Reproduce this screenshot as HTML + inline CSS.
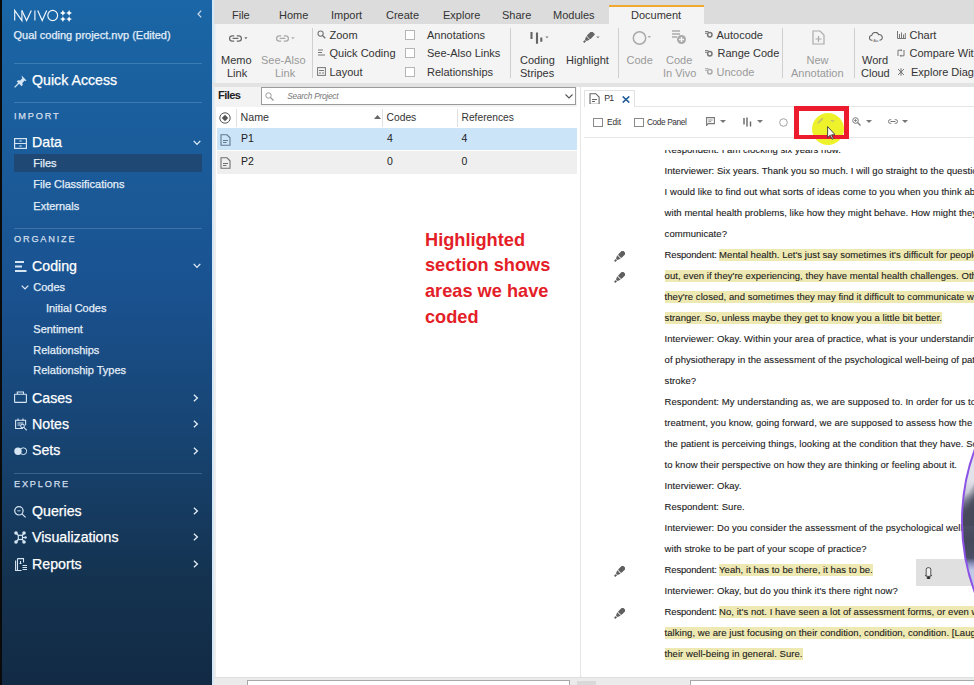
<!DOCTYPE html>
<html><head><meta charset="utf-8">
<style>
*{box-sizing:border-box;margin:0;padding:0}
html,body{width:974px;height:685px;overflow:hidden;background:#fff;font-family:"Liberation Sans",sans-serif;position:relative}
.a{position:absolute;white-space:nowrap}
#side{position:absolute;left:0;top:0;width:212px;height:685px;background:linear-gradient(180deg,#1a66a6 0%,#1b5c9a 22%,#1a5290 42%,#174370 65%,#14324f 85%,#122a44 100%)}
#blk{position:absolute;left:0;top:0;width:2px;height:685px;background:#0a0a0a}
.sep{position:absolute;left:14px;width:188px;height:1px;background:rgba(150,190,230,.28)}
.st{color:#fff;font-size:14.3px}
.ss{color:#eaf2fa;font-size:11px}
.sh{color:#d8e4f0;font-size:10px;letter-spacing:2.2px}
.chev{position:absolute;color:#e6eef7}
#tabs{position:absolute;left:214px;top:0;width:760px;height:24px;background:#dcdcdc}
.tab{position:absolute;top:8.5px;font-size:11px;color:#333}
#rib{position:absolute;left:214px;top:24px;width:760px;height:59px;background:#f4f4f4}
#gap{position:absolute;left:212px;top:83px;width:762px;height:4px;background:#e3e3e3}
.rt{font-size:11px;color:#333}
.gr{color:#9a9a9a}
.dl{position:absolute;left:83.6px;white-space:nowrap;font-size:9.5px;line-height:21px;color:#1a1a1a;-webkit-text-stroke:0.1px #1a1a1a;letter-spacing:0.05px}
.hl{background:#eee9b3;padding:0.4px 0 0.7px}
.sd{-webkit-text-stroke:0.25px currentColor}
.vsep{position:absolute;width:1px;background:#cfcfcf}
</style></head><body>
<div id="side"></div>
<div id="blk"></div>
<div class="a" style="left:212px;top:0;width:2px;height:685px;background:#d6e8f6"></div>
<div class="a" style="left:214px;top:87px;width:2px;height:590px;background:#ededed"></div>

<!-- sidebar content -->
<svg class="a" style="left:13px;top:9px" width="60" height="14" viewBox="0 0 60 14"><g fill="none" stroke="#f2f7fc" stroke-width="1.15"><path d="M1.7 11.6V1.4L8.9 11.6V1.4"/><path d="M8.9 1.4L13.6 11.6 18.3 1.4"/><path d="M21.9 1.4v10.2"/><path d="M24.7 1.4L29.2 11.6 33.7 1.4"/><ellipse cx="39.7" cy="6.5" rx="4.9" ry="5.1"/></g></svg>
<svg class="a" style="left:59.5px;top:10px" width="12" height="12" viewBox="0 0 12 12"><g fill="#fff"><path d="M2.9 0.0Q3.4 2.4 5.8 2.9Q3.4 3.4 2.9 5.8Q2.4 3.4 0.0 2.9Q2.4 2.4 2.9 0.0z"/><path d="M9.1 0.0Q9.6 2.4 12.0 2.9Q9.6 3.4 9.1 5.8Q8.6 3.4 6.199999999999999 2.9Q8.6 2.4 9.1 0.0z"/><path d="M2.9 6.199999999999999Q3.4 8.6 5.8 9.1Q3.4 9.6 2.9 12.0Q2.4 9.6 0.0 9.1Q2.4 8.6 2.9 6.199999999999999z"/><path d="M9.1 6.199999999999999Q9.6 8.6 12.0 9.1Q9.6 9.6 9.1 12.0Q8.6 9.6 6.199999999999999 9.1Q8.6 8.6 9.1 6.199999999999999z"/></g></svg>
<svg class="a" style="left:197px;top:10px" width="5" height="8" viewBox="0 0 5 8"><path d="M4.2 0.6L1 4l3.2 3.4" fill="none" stroke="#cfe0f0" stroke-width="1.2"/></svg>
<div class="a sd" style="left:13.5px;top:27.99px;font-size:11px;line-height:14px;color:#e3eef8;">Qual coding project.nvp (Edited)</div>
<div class="sep" style="top:62.5px"></div>
<div class="sep" style="top:102.0px"></div>
<div class="sep" style="top:227.9px"></div>
<div class="sep" style="top:472.8px"></div>
<div class="a sd" style="left:14px;top:109.81px;font-size:9.2px;line-height:12px;color:#d2dfec;letter-spacing:1.8px">IMPORT</div>
<div class="a sd" style="left:14px;top:232.81px;font-size:9.2px;line-height:12px;color:#d2dfec;letter-spacing:1.8px">ORGANIZE</div>
<div class="a sd" style="left:14px;top:477.81px;font-size:9.2px;line-height:12px;color:#d2dfec;letter-spacing:1.8px">EXPLORE</div>
<div class="a sd" style="left:32px;top:70.98px;font-size:14.2px;line-height:18px;color:#ffffff;">Quick Access</div>
<div class="a sd" style="left:32px;top:133.48px;font-size:14.2px;line-height:18px;color:#ffffff;">Data</div>
<div class="a sd" style="left:32px;top:257.48px;font-size:14.2px;line-height:18px;color:#ffffff;">Coding</div>
<div class="a sd" style="left:32px;top:388.78px;font-size:14.2px;line-height:18px;color:#ffffff;">Cases</div>
<div class="a sd" style="left:32px;top:415.08px;font-size:14.2px;line-height:18px;color:#ffffff;">Notes</div>
<div class="a sd" style="left:32px;top:441.28px;font-size:14.2px;line-height:18px;color:#ffffff;">Sets</div>
<div class="a sd" style="left:32px;top:501.68px;font-size:14.2px;line-height:18px;color:#ffffff;">Queries</div>
<div class="a sd" style="left:32px;top:527.98px;font-size:14.2px;line-height:18px;color:#ffffff;">Visualizations</div>
<div class="a sd" style="left:32px;top:555.08px;font-size:14.2px;line-height:18px;color:#ffffff;">Reports</div>
<div class="a" style="left:14px;top:154.2px;width:187.5px;height:17.8px;background:#1f4874"></div>
<div class="a sd" style="left:33.3px;top:156.19px;font-size:11px;line-height:14px;color:#e3eef8;">Files</div>
<div class="a sd" style="left:33.3px;top:177.49px;font-size:11px;line-height:14px;color:#e3eef8;">File Classifications</div>
<div class="a sd" style="left:33.3px;top:198.59px;font-size:11px;line-height:14px;color:#e3eef8;">Externals</div>
<div class="a sd" style="left:33.3px;top:279.79px;font-size:11px;line-height:14px;color:#e3eef8;">Codes</div>
<div class="a sd" style="left:45.9px;top:300.79px;font-size:11px;line-height:14px;color:#e3eef8;">Initial Codes</div>
<div class="a sd" style="left:33.3px;top:321.59px;font-size:11px;line-height:14px;color:#e3eef8;">Sentiment</div>
<div class="a sd" style="left:33.3px;top:342.69px;font-size:11px;line-height:14px;color:#e3eef8;">Relationships</div>
<div class="a sd" style="left:33.3px;top:363.49px;font-size:11px;line-height:14px;color:#e3eef8;">Relationship Types</div>
<!-- SIDEICONS -->
<svg class="a" style="left:13.5px;top:74.5px" width="13" height="13" viewBox="0 0 13 13"><g fill="#d6e5f3"><path d="M7.6 0.5l4.9 4.9-1.2 0.6-0.6-0.4-2.3 2.3 0.3 2.2-1.1 1.1L2.8 6.4l1.1-1.1 2.2 0.3 2.3-2.3-0.4-0.6z"/></g><path d="M5.2 7.8L0.6 12.4" stroke="#d6e5f3" stroke-width="1.3"/></svg>
<svg class="a" style="left:13.5px;top:137.5px" width="13" height="11" viewBox="0 0 13 11"><g fill="none" stroke="#d6e5f3" stroke-width="1.2"><rect x="0.6" y="0.6" width="11.8" height="9.8"/><path d="M0.6 5.5h11.8M5.3 3h2.4M5.3 8h2.4"/></g></svg>
<svg class="a" style="left:14.5px;top:260.5px" width="12" height="11" viewBox="0 0 12 11"><g stroke="#d6e5f3" stroke-width="1.8"><path d="M0 1h9M0 5.5h7M0 10h11.5"/></g></svg>
<svg class="a" style="left:14px;top:391px" width="13" height="12" viewBox="0 0 13 12"><g fill="none" stroke="#d6e5f3" stroke-width="1.1"><rect x="0.6" y="3.3" width="11.8" height="8.1" rx="0.5"/><path d="M3.3 3.3V1h6.2v2.3"/></g></svg>
<svg class="a" style="left:14.5px;top:417.5px" width="12.5" height="13" viewBox="0 0 12.5 13"><g fill="none" stroke="#d6e5f3" stroke-width="1.1"><path d="M8 10.5H0.6V2.2h10v5"/><path d="M3 0.5v2.5M8 0.5v2.5M2.5 5h6M2.5 7h3"/><circle cx="7.5" cy="8" r="1.8"/><path d="M8.8 9.3l3 3"/></g></svg>
<svg class="a" style="left:13.5px;top:447px" width="13.5" height="8.5" viewBox="0 0 13.5 8.5"><circle cx="4" cy="4.2" r="3.7" fill="#d6e5f3"/><circle cx="9.3" cy="4.2" r="3.4" fill="none" stroke="#d6e5f3" stroke-width="1"/></svg>
<svg class="a" style="left:14px;top:505.5px" width="13" height="12" viewBox="0 0 13 12"><g fill="none" stroke="#d6e5f3" stroke-width="1.2"><circle cx="4.9" cy="4.8" r="4.2"/><path d="M7.9 7.9l3.7 3.5"/><path d="M3.3 4.8h3.2" stroke-width="0.9"/></g></svg>
<svg class="a" style="left:13.5px;top:531px" width="13" height="13" viewBox="0 0 13 13"><g fill="#d6e5f3"><circle cx="2" cy="2" r="1.8"/><circle cx="10" cy="2" r="1.8"/><circle cx="2" cy="11" r="1.8"/><circle cx="10" cy="11" r="1.8"/><circle cx="11.5" cy="6.5" r="1.3"/></g><g fill="none" stroke="#d6e5f3" stroke-width="1.2"><rect x="4.3" y="4.3" width="4.2" height="4.2"/><path d="M2 2l2.3 2.3M10 2L8.5 4.3M2 11l2.3-2.5M10 11L8.5 8.5M8.5 6.5h3"/></g></svg>
<svg class="a" style="left:14.5px;top:557.5px" width="12.5" height="13.5" viewBox="0 0 12.5 13.5"><g fill="none" stroke="#d6e5f3" stroke-width="1.1"><path d="M2.5 12.5H0.6V2.5"/><path d="M2.5 0.6h6v4M2.5 0.6v11.9h4"/><path d="M5.5 3v2M4.5 5.5h2"/></g><g stroke="#d6e5f3" stroke-width="1"><path d="M7.5 7.5h5M7.5 9.5h5M7.5 11.5h5"/></g></svg>
<!-- chevrons -->
<svg class="a" style="left:192.5px;top:139.5px" width="8" height="6" viewBox="0 0 8 6"><path d="M0.7 0.9L4 4.4 7.3 0.9" fill="none" stroke="#e4eef8" stroke-width="1.3"/></svg>
<svg class="a" style="left:192.5px;top:262.5px" width="8" height="6" viewBox="0 0 8 6"><path d="M0.7 0.9L4 4.4 7.3 0.9" fill="none" stroke="#e4eef8" stroke-width="1.3"/></svg>
<svg class="a" style="left:21px;top:284.5px" width="8" height="5" viewBox="0 0 8 5"><path d="M0.7 0.7L4 4 7.3 0.7" fill="none" stroke="#e4eef8" stroke-width="1.2"/></svg>
<svg class="a" style="left:193px;top:394px" width="6" height="8" viewBox="0 0 6 8"><path d="M0.9 0.7L4.4 4 0.9 7.3" fill="none" stroke="#e4eef8" stroke-width="1.3"/></svg>
<svg class="a" style="left:193px;top:420.3px" width="6" height="8" viewBox="0 0 6 8"><path d="M0.9 0.7L4.4 4 0.9 7.3" fill="none" stroke="#e4eef8" stroke-width="1.3"/></svg>
<svg class="a" style="left:193px;top:446.5px" width="6" height="8" viewBox="0 0 6 8"><path d="M0.9 0.7L4.4 4 0.9 7.3" fill="none" stroke="#e4eef8" stroke-width="1.3"/></svg>
<svg class="a" style="left:193px;top:506.9px" width="6" height="8" viewBox="0 0 6 8"><path d="M0.9 0.7L4.4 4 0.9 7.3" fill="none" stroke="#e4eef8" stroke-width="1.3"/></svg>
<svg class="a" style="left:193px;top:533.2px" width="6" height="8" viewBox="0 0 6 8"><path d="M0.9 0.7L4.4 4 0.9 7.3" fill="none" stroke="#e4eef8" stroke-width="1.3"/></svg>
<svg class="a" style="left:193px;top:560.3px" width="6" height="8" viewBox="0 0 6 8"><path d="M0.9 0.7L4.4 4 0.9 7.3" fill="none" stroke="#e4eef8" stroke-width="1.3"/></svg>

<!-- tabs -->
<div id="tabs"></div>
<div class="tab" style="left:232px">File</div>
<div class="tab" style="left:279px">Home</div>
<div class="tab" style="left:331px">Import</div>
<div class="tab" style="left:386px">Create</div>
<div class="tab" style="left:443px">Explore</div>
<div class="tab" style="left:502px">Share</div>
<div class="tab" style="left:553px">Modules</div>
<div class="a" style="left:609px;top:5px;width:95px;height:19px;background:#f4f4f4;border-top:2px solid #f0a830"></div>
<div class="tab" style="left:631px">Document</div>

<!-- ribbon -->
<div id="rib"></div>
<div id="gap"></div>
<!-- ribbon content -->
<div class="a" style="left:214px;top:24px;width:2px;height:59px;background:#e9eef3"></div>
<svg class="a" style="left:228.5px;top:34.5px" width="19" height="7" viewBox="0 0 19 7"><g fill="none" stroke="#6a6a6a" stroke-width="1.25"><path d="M5.2 0.8H3.2A2.6 2.6 0 0 0 3.2 6H5.2M7.8 0.8h2a2.6 2.6 0 0 1 0 5.2h-2M3.6 3.4h5.8"/></g><path d="M15.3 2.2h3.2l-1.6 2z" fill="#6a6a6a"/></svg>
<div class="a rt" style="left:221px;top:53.5px;line-height:13px">Memo</div>
<div class="a rt" style="left:227px;top:66.5px;line-height:13px">Link</div>
<svg class="a" style="left:276px;top:34.5px" width="19" height="7" viewBox="0 0 19 7"><g fill="none" stroke="#a8a8a8" stroke-width="1.25"><path d="M5.2 0.8H3.2A2.6 2.6 0 0 0 3.2 6H5.2M7.8 0.8h2a2.6 2.6 0 0 1 0 5.2h-2M3.6 3.4h5.8"/></g><path d="M15.3 2.2h3.2l-1.6 2z" fill="#a8a8a8"/></svg>
<div class="a rt gr" style="left:261px;top:53.5px;line-height:13px">See-Also</div>
<div class="a rt gr" style="left:275px;top:66.5px;line-height:13px">Link</div>
<div class="vsep" style="left:312px;top:28px;height:50px"></div>

<svg class="a" style="left:317px;top:30px" width="9" height="9" viewBox="0 0 9 9"><circle cx="3.6" cy="3.6" r="2.6" fill="none" stroke="#777" stroke-width="1.1"/><path d="M5.5 5.5L8.3 8.3" stroke="#777" stroke-width="1.4"/></svg>
<div class="a rt" style="left:329.5px;top:29.2px;line-height:13px">Zoom</div>
<svg class="a" style="left:317px;top:49px" width="9" height="8" viewBox="0 0 9 8"><path d="M1 1h5M1 3.5h4M1 6h7" stroke="#777" stroke-width="1.1"/></svg>
<div class="a rt" style="left:329.5px;top:47.2px;line-height:13px">Quick Coding</div>
<svg class="a" style="left:317px;top:67px" width="9" height="9" viewBox="0 0 9 9"><rect x="0.6" y="0.6" width="7.8" height="7.8" fill="none" stroke="#777" stroke-width="1"/><path d="M2 3.5h5M2 6h2M5 6h2" stroke="#777" stroke-width="1"/></svg>
<div class="a rt" style="left:329.5px;top:66.1px;line-height:13px">Layout</div>

<div class="a" style="left:405px;top:29.5px;width:10px;height:10px;border:1px solid #b5b5b5;background:#fff"></div>
<div class="a rt" style="left:427px;top:29.2px;line-height:13px">Annotations</div>
<div class="a" style="left:405px;top:47.5px;width:10px;height:10px;border:1px solid #b5b5b5;background:#fff"></div>
<div class="a rt" style="left:427px;top:47.2px;line-height:13px">See-Also Links</div>
<div class="a" style="left:405px;top:66.5px;width:10px;height:10px;border:1px solid #b5b5b5;background:#fff"></div>
<div class="a rt" style="left:427px;top:66.1px;line-height:13px">Relationships</div>
<div class="vsep" style="left:510px;top:28px;height:50px"></div>

<svg class="a" style="left:530px;top:32px" width="20" height="12" viewBox="0 0 20 12"><path d="M1.5 0v7M7 0.5v11.2M11.3 5.4v4.4" stroke="#666" stroke-width="2.1"/><path d="M15.3 4.6h3.3l-1.65 1.6z" fill="#777"/></svg>
<div class="a rt" style="left:520px;top:53.5px;line-height:13px">Coding</div>
<div class="a rt" style="left:520px;top:66.5px;line-height:13px">Stripes</div>
<svg class="a" style="left:582px;top:32px" width="19" height="12" viewBox="0 0 19 12"><g transform="rotate(45 6 6)" fill="#666"><rect x="3.5" y="-1.6" width="5" height="7" rx="1"/><path d="M3.5 6.1h5L7 9.3H5z"/><rect x="5.1" y="9.7" width="1.8" height="2.4"/></g><path d="M14.3 4.6h3.3l-1.65 1.6z" fill="#777"/></svg>
<div class="a rt" style="left:566px;top:53.5px;line-height:13px">Highlight</div>
<div class="vsep" style="left:618px;top:28px;height:50px"></div>

<svg class="a" style="left:632px;top:30px" width="20" height="16" viewBox="0 0 20 16"><circle cx="7.5" cy="8" r="6.2" fill="none" stroke="#aaa" stroke-width="1.5"/><path d="M15.5 6h3.5l-1.75 2z" fill="#aaa"/></svg>
<div class="a rt gr" style="left:626.5px;top:53.5px;line-height:13px">Code</div>
<svg class="a" style="left:671px;top:29px" width="16" height="16" viewBox="0 0 16 16"><path d="M1 2h8M1 5h8M1 8h5" stroke="#aaa" stroke-width="1.4"/><circle cx="10.5" cy="10.5" r="4.5" fill="#aaa"/><path d="M10.5 8v5M8 10.5h5" stroke="#f4f4f4" stroke-width="1.4"/></svg>
<div class="a rt gr" style="left:666px;top:53.5px;line-height:13px">Code</div>
<div class="a rt gr" style="left:663px;top:66.5px;line-height:13px">In Vivo</div>
<svg class="a" style="left:705px;top:31.3px" width="8" height="7" viewBox="0 0 8 7"><path d="M0 0.6h3.5M0 2.3h2.2" stroke="#777" stroke-width="1"/><circle cx="4.8" cy="3.8" r="2.2" fill="none" stroke="#777" stroke-width="1.5"/></svg>
<div class="a rt" style="left:716.5px;top:29.2px;line-height:13px">Autocode</div>
<svg class="a" style="left:705px;top:49.5px" width="8" height="7" viewBox="0 0 8 7"><path d="M0 0.6h3.5M0 2.3h2.2" stroke="#777" stroke-width="1"/><circle cx="4.8" cy="3.8" r="2.2" fill="none" stroke="#777" stroke-width="1.5"/></svg>
<div class="a rt" style="left:717.5px;top:47.2px;line-height:13px">Range Code</div>
<svg class="a" style="left:705px;top:68.3px" width="8" height="7" viewBox="0 0 8 7"><path d="M0 0.6h3.5M0 2.3h2.2" stroke="#aaa" stroke-width="1"/><circle cx="4.8" cy="3.8" r="2.2" fill="none" stroke="#aaa" stroke-width="1.5"/></svg>
<div class="a rt gr" style="left:716.5px;top:66.1px;line-height:13px">Uncode</div>
<div class="vsep" style="left:782px;top:28px;height:50px"></div>

<svg class="a" style="left:812px;top:30px" width="13" height="15" viewBox="0 0 13 15"><path d="M1 1h7l4 4v9H1z" fill="none" stroke="#aaa" stroke-width="1.2"/><path d="M6.5 6v6M3.5 9h6" stroke="#aaa" stroke-width="1.2"/></svg>
<div class="a rt gr" style="left:806.5px;top:53.5px;line-height:13px">New</div>
<div class="a rt gr" style="left:791px;top:66.5px;line-height:13px">Annotation</div>
<div class="vsep" style="left:854px;top:28px;height:50px"></div>

<svg class="a" style="left:868.5px;top:32px" width="14" height="11" viewBox="0 0 14 11"><path d="M3.5 8.3H3a2.4 2.4 0 0 1-.3-4.8A3.6 3.6 0 0 1 9.6 2.6a2.9 2.9 0 0 1 1.4 5.7h-.5" fill="none" stroke="#666" stroke-width="1.1"/><text x="4.3" y="10.3" font-family="Liberation Sans" font-size="4.2" fill="#666">Aa</text></svg>
<div class="a rt" style="left:862px;top:53.5px;line-height:13px">Word</div>
<div class="a rt" style="left:861px;top:66.5px;line-height:13px">Cloud</div>
<svg class="a" style="left:896.5px;top:31px" width="9" height="8" viewBox="0 0 9 8"><path d="M0.5 0v7.5h8.5" fill="none" stroke="#777" stroke-width="1"/><path d="M2.5 3v4M4.5 1.5v5.5M6.5 3.5v3.5M8.3 2v5" stroke="#777" stroke-width="1"/></svg>
<div class="a rt" style="left:909.5px;top:29.2px;line-height:13px">Chart</div>
<svg class="a" style="left:897px;top:49px" width="8" height="8" viewBox="0 0 8 8"><path d="M1 7V1.2h3.5M7 1v5.8H3.5" fill="none" stroke="#777" stroke-width="1"/><path d="M3.8 0l1.6 1.2-1.6 1.2zM4.2 8L2.6 6.8l1.6-1.2z" fill="#777"/></svg>
<div class="a rt" style="left:909.5px;top:47.2px;line-height:13px">Compare With</div>
<svg class="a" style="left:897px;top:68px" width="8" height="8" viewBox="0 0 8 8"><path d="M1 1l6 6M7 1L1 7M4 0.2v7.6" stroke="#777" stroke-width="1"/><circle cx="4" cy="4" r="1.3" fill="#777"/></svg>
<div class="a rt" style="left:911px;top:66.1px;line-height:13px">Explore Diagram</div>

<!-- files panel -->
<div class="a" style="left:215px;top:87px;width:362px;height:20px;background:#f3f3f3"></div>
<div class="a" style="left:218px;top:89px;font-size:11.2px;font-weight:700;color:#222;line-height:13px;letter-spacing:-0.6px">Files</div>
<div class="a" style="left:261px;top:87px;width:315px;height:18px;border:1px solid #9a9a9a;background:#fff"></div>
<svg class="a" style="left:265px;top:92px" width="9" height="9" viewBox="0 0 9 9"><circle cx="3.5" cy="3.5" r="2.7" fill="none" stroke="#999" stroke-width="1"/><path d="M5.5 5.5L8.5 8.5" stroke="#999" stroke-width="1.2"/></svg>
<div class="a" style="left:287.3px;top:89.9px;font-size:8.3px;font-style:italic;color:#777;line-height:12px;letter-spacing:-0.25px">Search Project</div>
<svg class="a" style="left:565px;top:93.5px" width="8" height="5" viewBox="0 0 8 5"><path d="M0.5 0.5L4 4 7.5 0.5" fill="none" stroke="#555" stroke-width="1.1"/></svg>
<svg class="a" style="left:219px;top:111.5px" width="12" height="12" viewBox="0 0 12 12"><circle cx="6" cy="6" r="5.2" fill="none" stroke="#555" stroke-width="1"/><path d="M6 2.8L9.2 6 6 9.2 2.8 6z" fill="#555"/></svg>
<div class="vsep" style="left:236px;top:109px;height:18px;background:#e0e0e0"></div>
<div class="a" style="left:240.5px;top:111px;font-size:10.7px;color:#333;line-height:13px">Name</div>
<svg class="a" style="left:374px;top:114.5px" width="7" height="4" viewBox="0 0 7 4"><path d="M0 4L3.5 0 7 4z" fill="#666"/></svg>
<div class="vsep" style="left:382px;top:109px;height:18px;background:#e0e0e0"></div>
<div class="a" style="left:386.5px;top:111px;font-size:10.3px;color:#333;line-height:13px">Codes</div>
<div class="vsep" style="left:457px;top:109px;height:18px;background:#e0e0e0"></div>
<div class="a" style="left:461.5px;top:111px;font-size:10.25px;color:#333;line-height:13px">References</div>

<div class="a" style="left:217px;top:128px;width:360px;height:22px;background:#cce4f8"></div>
<svg class="a" style="left:219.5px;top:134px" width="11" height="12" viewBox="0 0 11 12"><path d="M1 0.8h6l3 3v7.4H1z" fill="none" stroke="#607890" stroke-width="1.1"/><path d="M3 6.5h5M3 8.5h3.5" stroke="#607890" stroke-width="1"/></svg>
<div class="a" style="left:241px;top:131.5px;font-size:10.5px;color:#222;line-height:13px">P1</div>
<div class="a" style="left:387px;top:131.5px;font-size:10.5px;color:#222;line-height:13px">4</div>
<div class="a" style="left:461.5px;top:131.5px;font-size:10.5px;color:#222;line-height:13px">4</div>

<div class="a" style="left:217px;top:151px;width:360px;height:23px;background:#efefef"></div>
<svg class="a" style="left:219.5px;top:157px" width="11" height="12" viewBox="0 0 11 12"><path d="M1 0.8h6l3 3v7.4H1z" fill="none" stroke="#707070" stroke-width="1.1"/><path d="M3 6.5h5M3 8.5h3.5" stroke="#707070" stroke-width="1"/></svg>
<div class="a" style="left:241px;top:154.5px;font-size:10.5px;color:#222;line-height:13px">P2</div>
<div class="a" style="left:387px;top:154.5px;font-size:10.5px;color:#222;line-height:13px">0</div>
<div class="a" style="left:461.5px;top:154.5px;font-size:10.5px;color:#222;line-height:13px">0</div>

<div class="a" style="left:425px;top:227.5px;font-size:18.2px;font-weight:700;color:#e41e28;line-height:25.9px;white-space:normal;width:150px">Highlighted section shows areas we have coded</div>

<!-- panel divider -->
<div class="a" style="left:580px;top:87px;width:2px;height:590px;background:#e6e6e6"></div>

<!-- doc panel -->
<div class="a" style="left:581px;top:87px;width:393px;height:589px;background:#fff"></div>
<div class="a" style="left:583.5px;top:89.5px;width:51.5px;height:17px;border:1px solid #e2e2e2;border-bottom:none;background:#fff"></div>
<div class="a" style="left:634.5px;top:106px;width:340px;height:1px;background:#e6e6e6"></div>
<svg class="a" style="left:588.5px;top:92.5px" width="11" height="11.5" viewBox="0 0 11 11.5"><path d="M1 0.7h5.8l3.3 3.3v6.8a0.6 0.6 0 0 1-.6.6H1.6a0.6 0.6 0 0 1-.6-.6z" fill="none" stroke="#666" stroke-width="1.1"/><path d="M3 6.5h5M3 8.5h3" stroke="#666" stroke-width="1"/></svg>
<div class="a" style="left:604.3px;top:91.6px;font-size:8.8px;color:#333;line-height:12px;letter-spacing:-0.8px">P1</div>
<svg class="a" style="left:622px;top:96px" width="8" height="7" viewBox="0 0 8 7"><path d="M0.7 0.4L7.3 6.6M7.3 0.4L0.7 6.6" stroke="#1f5a96" stroke-width="1.5"/></svg>

<div class="a" style="left:593px;top:117.5px;width:10px;height:9.5px;border:1px solid #8a8a8a;background:#fff"></div>
<div class="a" style="left:607px;top:116.2px;font-size:8.3px;color:#333;line-height:12px;letter-spacing:-0.1px">Edit</div>
<div class="a" style="left:633.5px;top:117.5px;width:10px;height:9.5px;border:1px solid #8a8a8a;background:#fff"></div>
<div class="a" style="left:647px;top:116.2px;font-size:8.3px;color:#333;line-height:12px;letter-spacing:-0.4px">Code Panel</div>
<svg class="a" style="left:705.5px;top:117px" width="9" height="9" viewBox="0 0 9 9"><path d="M0.6 0.6h7.8v6H2.2L0.6 8.4z" fill="none" stroke="#777" stroke-width="1.1"/><path d="M2.3 3h4.4M2.3 4.7h3" stroke="#888" stroke-width="0.9"/></svg>
<svg class="a" style="left:720px;top:120px" width="6" height="3" viewBox="0 0 6 3"><path d="M0 0h6L3 3z" fill="#777"/></svg>
<svg class="a" style="left:742.5px;top:116.5px" width="9" height="10" viewBox="0 0 9 10"><path d="M1 1v6.5M4 0.5v9M7.5 4.5v5" stroke="#666" stroke-width="1.4"/></svg>
<svg class="a" style="left:756.5px;top:120px" width="6" height="3" viewBox="0 0 6 3"><path d="M0 0h6L3 3z" fill="#777"/></svg>
<svg class="a" style="left:778.5px;top:117.5px" width="9" height="9" viewBox="0 0 9 9"><circle cx="4.5" cy="4.5" r="3.8" fill="none" stroke="#999" stroke-width="0.9"/></svg>
<svg class="a" style="left:851.5px;top:117px" width="9" height="9" viewBox="0 0 9 9"><circle cx="3.5" cy="3.5" r="2.8" fill="none" stroke="#777" stroke-width="1"/><path d="M3.5 2v3M2 3.5h3" stroke="#777" stroke-width="0.8"/><path d="M5.5 5.5L8.5 8.5" stroke="#777" stroke-width="1.3"/></svg>
<svg class="a" style="left:866px;top:120px" width="6" height="3" viewBox="0 0 6 3"><path d="M0 0h6L3 3z" fill="#777"/></svg>
<svg class="a" style="left:887.5px;top:119px" width="10" height="5" viewBox="0 0 10 5"><path d="M3.3 0.6H2.4a1.9 1.9 0 0 0 0 3.8h0.9M6.7 0.6h0.9a1.9 1.9 0 0 1 0 3.8H6.7M2.5 2.5h5" fill="none" stroke="#777" stroke-width="1"/></svg>
<svg class="a" style="left:902px;top:120px" width="6" height="3" viewBox="0 0 6 3"><path d="M0 0h6L3 3z" fill="#777"/></svg>
<div class="a" style="left:584px;top:136.5px;width:390px;height:1px;background:#e8e8e8"></div>

<!-- highlighter cursor -->
<div class="a" style="left:812px;top:113px;width:32px;height:32px;border-radius:50%;background:#eef22a"></div>
<div class="a" style="left:794.3px;top:106.2px;width:54.6px;height:32.6px;border:5px solid #ec1c2e;border-bottom-width:4.5px"></div>
<svg class="a" style="left:815px;top:111.5px" width="29" height="23" viewBox="0 0 29 23"><path d="M0 0h29v23H0z" fill="none"/></svg>
<svg class="a" style="left:816px;top:117px" width="20" height="8" viewBox="0 0 20 8"><path d="M1 7l1-2.5 4-4 1.5 1.5-4 4z" fill="#c8c860"/><path d="M14 3h5l-2.5 2.5z" fill="#c8c860"/></svg>
<svg class="a" style="left:827px;top:126px" width="8" height="14" viewBox="0 0 8 14"><path d="M0.6 0.6v11l2.6-2.4 1.8 4 1.4-.6-1.8-3.8h3.6z" fill="#fff" stroke="#333" stroke-width="0.9"/></svg>

<div class="a" style="left:581px;top:150.3px;width:393px;height:526.5px;overflow:hidden">
<div class="dl" style="top:-11.09px">Respondent: I am clocking six years now.</div>
<div class="dl" style="top:9.91px">Interviewer: Six years. Thank you so much. I will go straight to the questions then.</div>
<div class="dl" style="top:30.91px">I would like to find out what sorts of ideas come to you when you think about people</div>
<div class="dl" style="top:51.91px">with mental health problems, like how they might behave. How might they</div>
<div class="dl" style="top:72.91px">communicate?</div>
<div class="dl" style="top:93.91px"><span style="letter-spacing:-0.17px">Respondent: </span><span class="hl">Mental health. Let&#x27;s just say sometimes it&#x27;s difficult for people to come</span></div>
<div class="dl" style="top:114.91px"><span class="hl">out, even if they&#x27;re experiencing, they have mental health challenges. Others</span></div>
<div class="dl" style="top:135.91px"><span class="hl">they&#x27;re closed, and sometimes they may find it difficult to communicate with a</span></div>
<div class="dl" style="top:156.91px"><span class="hl">stranger. So, unless maybe they get to know you a little bit better.</span></div>
<div class="dl" style="top:177.91px">Interviewer: Okay. Within your area of practice, what is your understanding of the role</div>
<div class="dl" style="top:198.91px">of physiotherapy in the assessment of the psychological well-being of patients with</div>
<div class="dl" style="top:219.91px">stroke?</div>
<div class="dl" style="top:240.91px">Respondent: My understanding as, we are supposed to. In order for us to know the</div>
<div class="dl" style="top:261.91px">treatment, you know, going forward, we are supposed to assess how the patient</div>
<div class="dl" style="top:282.91px">the patient is perceiving things, looking at the condition that they have. So we need</div>
<div class="dl" style="top:303.91px">to know their perspective on how they are thinking or feeling about it.</div>
<div class="dl" style="top:324.91px">Interviewer: Okay.</div>
<div class="dl" style="top:345.91px">Respondent: Sure.</div>
<div class="dl" style="top:366.91px">Interviewer: Do you consider the assessment of the psychological well-being of patients</div>
<div class="dl" style="top:387.91px">with stroke to be part of your scope of practice?</div>
<div class="dl" style="top:408.91px"><span style="letter-spacing:-0.17px">Respondent: </span><span class="hl">Yeah, it has to be there, it has to be.</span></div>
<div class="dl" style="top:429.91px">Interviewer: Okay, but do you think it&#x27;s there right now?</div>
<div class="dl" style="top:450.91px"><span style="letter-spacing:-0.17px">Respondent: </span><span class="hl">No, it&#x27;s not. I have seen a lot of assessment forms, or even when we are</span></div>
<div class="dl" style="top:471.91px"><span class="hl">talking, we are just focusing on their condition, condition, condition. [Laughs] Not</span></div>
<div class="dl" style="top:492.91px"><span class="hl">their well-being in general. Sure.</span></div>
</div>
</div>
</div>
</div>
<!-- pencils -->
<svg class="a" style="left:612.5px;top:251px" width="12" height="12" viewBox="0 0 12 12"><g transform="rotate(45 6 6)" fill="#5f5f5f"><rect x="3.6" y="-1.4" width="4.8" height="6.6" rx="1"/><path d="M3.6 6.1h4.8L7 9.2H5z"/><rect x="5.1" y="9.6" width="1.8" height="2.6"/></g></svg>
<svg class="a" style="left:612.5px;top:271.8px" width="12" height="12" viewBox="0 0 12 12"><g transform="rotate(45 6 6)" fill="#5f5f5f"><rect x="3.6" y="-1.4" width="4.8" height="6.6" rx="1"/><path d="M3.6 6.1h4.8L7 9.2H5z"/><rect x="5.1" y="9.6" width="1.8" height="2.6"/></g></svg>
<svg class="a" style="left:612.5px;top:565.8px" width="12" height="12" viewBox="0 0 12 12"><g transform="rotate(45 6 6)" fill="#5f5f5f"><rect x="3.6" y="-1.4" width="4.8" height="6.6" rx="1"/><path d="M3.6 6.1h4.8L7 9.2H5z"/><rect x="5.1" y="9.6" width="1.8" height="2.6"/></g></svg>
<svg class="a" style="left:612.5px;top:607.8px" width="12" height="12" viewBox="0 0 12 12"><g transform="rotate(45 6 6)" fill="#5f5f5f"><rect x="3.6" y="-1.4" width="4.8" height="6.6" rx="1"/><path d="M3.6 6.1h4.8L7 9.2H5z"/><rect x="5.1" y="9.6" width="1.8" height="2.6"/></g></svg>
<!-- mic button -->
<div class="a" style="left:915.6px;top:559.2px;width:60px;height:26.6px;background:#e0e0e0"></div>
<svg class="a" style="left:923.5px;top:566.5px" width="9" height="13" viewBox="0 0 9 13"><path d="M2.2 8.3V2.2a2.3 1.6 0 0 1 4.6 0v6.1" fill="#eee" stroke="#444" stroke-width="0.9"/><path d="M1.2 8.2q3.3 2.6 6.6 0" fill="none" stroke="#444" stroke-width="1.1"/><ellipse cx="4.5" cy="11" rx="2" ry="1" fill="#222"/></svg>
<!-- webcam -->
<div class="a" style="left:960.5px;top:313.5px;width:414px;height:414px;border-radius:50%;border:2px solid #8c52e6;overflow:hidden;background:linear-gradient(180deg,#e8e8ef 0%,#e2e3ea 40%,#c9cad6 43%,#8c8fa3 45%,#55586c 47.5%,#45485b 55%,#4a4e66 59%,#8e96c0 60.5%,#c0c8e8 62%,#ccd2ea 100%)"><div style="position:absolute;left:-10px;top:150px;width:40px;height:60px;background:linear-gradient(120deg,rgba(0,0,0,0) 40%,rgba(70,72,90,.9) 55%,rgba(70,72,90,.9) 100%)"></div></div>
<!-- footer -->
<div class="a" style="left:214px;top:676.8px;width:760px;height:9px;background:#ebebeb"></div>
<div class="a" style="left:214px;top:676.8px;width:760px;height:1px;background:#dedede"></div>
<div class="a" style="left:247px;top:680.3px;width:323px;height:6px;background:#fff;border:1px solid #a8a8a8;border-bottom:none"></div>
<div class="a" style="left:577px;top:681px;width:18.5px;height:5px;background:#d9d9d9"></div>
<div class="a" style="left:690px;top:680.3px;width:290px;height:6px;background:#fff;border:1px solid #a8a8a8;border-bottom:none"></div>

</body></html>
